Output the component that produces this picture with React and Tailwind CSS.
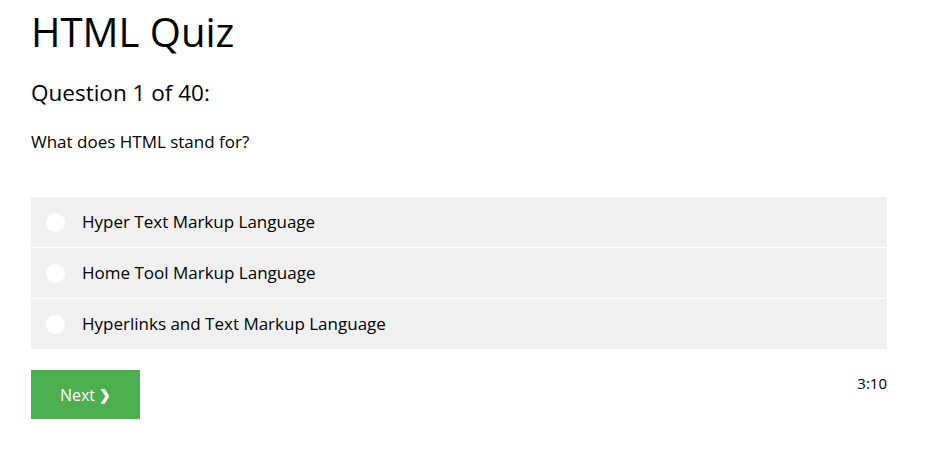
import React, { useState } from "react";

const options = [
    "Hyper Text Markup Language",
    "Home Tool Markup Language",
    "Hyperlinks and Text Markup Language",
];

const App = () => {
    const [picked, setPicked] = useState(null);

    return (
        <div className="w-[928px] h-[457px] bg-white text-black font-['Open_Sans',sans-serif]">
            <div className="pl-[31px] pr-[41px] pt-[7px]">

                {/* Heading */}
                <h1 className="text-[40px] leading-[50px]">HTML Quiz</h1>
                <h2 className="mt-[21px] text-[22.5px] leading-[30px]">Question 1 of 40:</h2>
                <p className="mt-[22px] text-[17px] leading-[24px]">What does HTML stand for?</p>

                {/* Answers */}
                <ul className="mt-[43px] flex flex-col gap-px">
                    {options.map((opt, i) => (
                        <li key={opt}>
                            <label className="flex items-center h-[50px] bg-[#f0f0f0] pl-[15px] cursor-pointer">
                                <span
                                    onClick={() => setPicked(i)}
                                    className="w-[19px] h-[19px] rounded-full bg-white flex items-center justify-center"
                                >
                                    {picked === i && <span className="w-[9px] h-[9px] rounded-full bg-[#4caf50]" />}
                                </span>
                                <span className="ml-[17px] text-[17px]">{opt}</span>
                            </label>
                        </li>
                    ))}
                </ul>

                {/* Footer */}
                <div className="mt-[21px] flex items-start justify-between">
                    <button className="w-[109px] h-[49px] bg-[#4caf50] text-white text-[16px] flex items-center justify-center gap-1">
                        Next <span className="font-bold text-[14px]">❯</span>
                    </button>
                    <span className="mt-[2px] text-[15px]">3:10</span>
                </div>

            </div>
        </div>
    );
};

export default App;
